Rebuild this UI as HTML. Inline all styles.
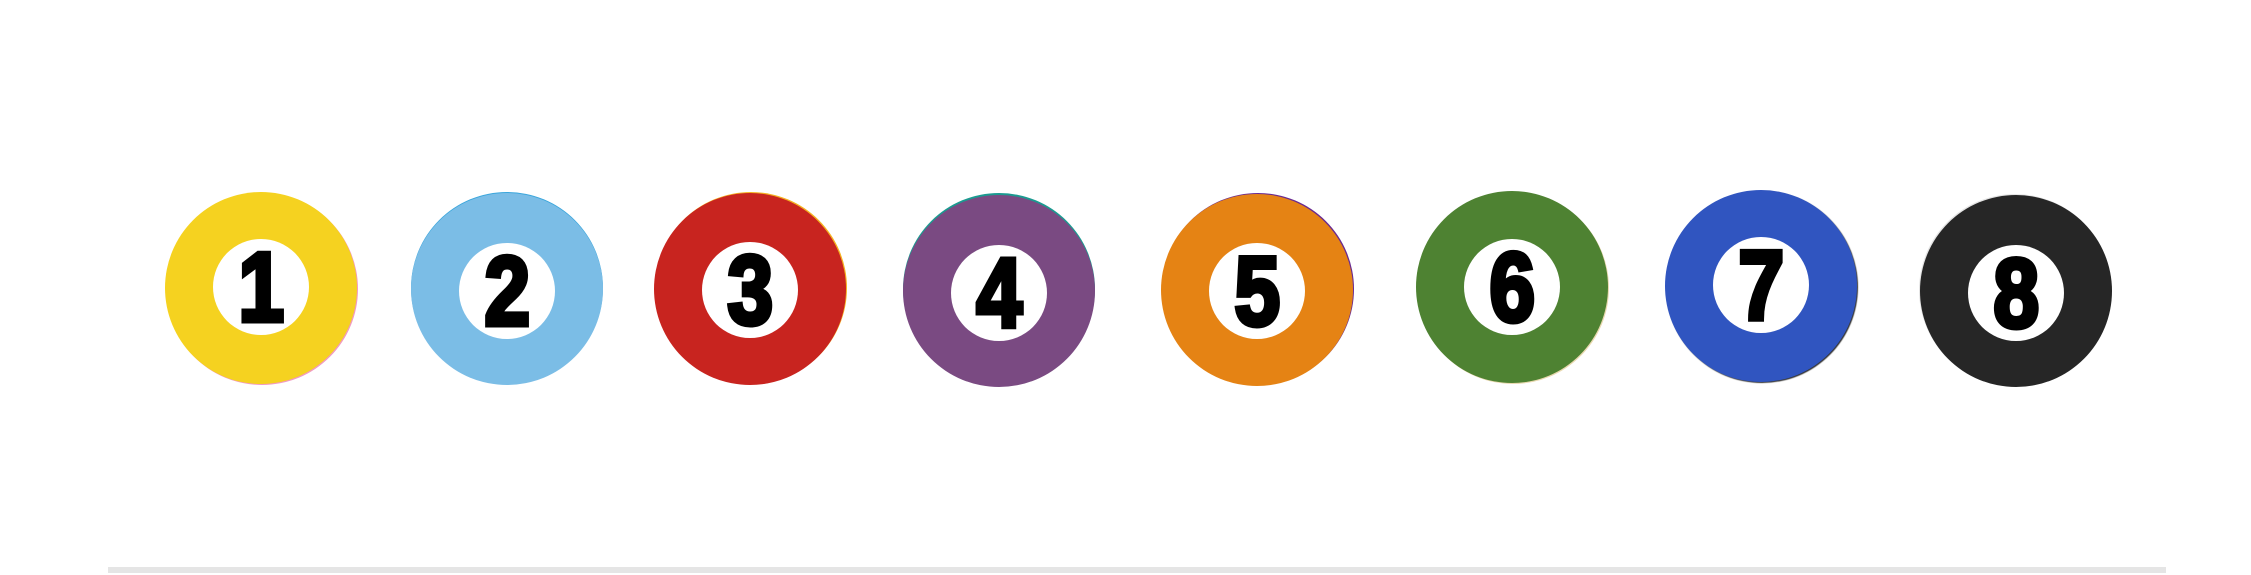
<!DOCTYPE html>
<html><head><meta charset="utf-8"><style>
html,body{margin:0;padding:0;background:#fff;width:2251px;height:575px;overflow:hidden;position:relative}
.b{position:absolute;width:192px;height:192px;border-radius:50%}
.i{position:absolute;left:48px;top:48px;width:96px;height:96px;border-radius:50%;background:#fff;display:flex;align-items:center;justify-content:center}
.i span{display:block;font-family:"Liberation Sans",sans-serif;font-weight:bold;font-size:98px;line-height:1;color:#000;-webkit-text-stroke:5px #000;transform:scaleX(0.84)}
.line{position:absolute;left:108px;top:567px;width:2058px;height:6px;background:#e5e5e5}
</style></head><body>
<div class="b" style="left:165px;top:192px;background:#f5d220;box-shadow:1px 1px 0 #f19ac0"><div class="i" style="margin-top:-1px"><span>1</span></div></div>
<div class="b" style="left:411px;top:193px;background:#7bbde6;box-shadow:0 -1px 0 #3aa6dc"><div class="i" style="margin-top:2px"><span>2</span></div></div>
<div class="b" style="left:654px;top:193px;background:#c8241f;box-shadow:1px -1px 0 #f5b120"><div class="i" style="margin-top:1px"><span>3</span></div></div>
<div class="b" style="left:903px;top:195px;background:#7a4a82;box-shadow:0 -2px 0 #1b9a90"><div class="i" style="margin-top:2px"><span>4</span></div></div>
<div class="b" style="left:1161px;top:194px;background:#e58314;box-shadow:1px -1px 0 #6a2a90"><div class="i" style="margin-top:1px"><span>5</span></div></div>
<div class="b" style="left:1416px;top:191px;background:#4e8232;box-shadow:1px 1px 0 #e9d9b0"><div class="i"><span>6</span></div></div>
<div class="b" style="left:1665px;top:190px;background:#3055c0;box-shadow:1px 1px 1px #333"><div class="i" style="margin-top:-1px"><span>7</span></div></div>
<div class="b" style="left:1920px;top:195px;background:#262626;box-shadow:-1px -1px 0 #e5e5e5"><div class="i" style="margin-top:2px"><span>8</span></div></div>
<div class="line"></div>
</body></html>
